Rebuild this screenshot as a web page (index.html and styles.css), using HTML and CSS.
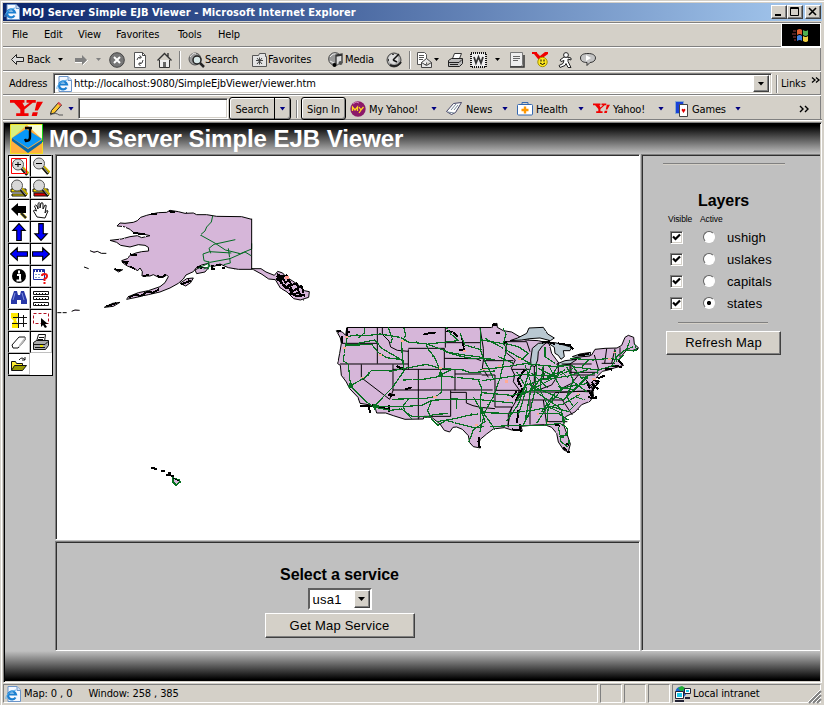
FILE: index.html
```html
<!DOCTYPE html>
<html lang="en">
<head>
<meta charset="utf-8">
<title>MOJ Server Simple EJB Viewer</title>
<link rel="stylesheet" href="styles.css">
</head>
<body>
<svg width="0" height="0" class="defs" aria-hidden="true">
  <filter id="rough" x="-5%" y="-5%" width="110%" height="110%" color-interpolation-filters="sRGB"><feTurbulence type="fractalNoise" baseFrequency=".14" numOctaves="2" seed="4"/><feDisplacementMap in="SourceGraphic" scale="5" xChannelSelector="R" yChannelSelector="G"/></filter>
  <symbol id="ie" viewBox="0 0 16 16"><path d="M3 .5h9l3.500 3.500v11.500H3z" fill="#f4f8ff" stroke="#6a94c8"/><path d="M12 .5v4h3.500" fill="#cfe0f5" stroke="#6a94c8"/><path d="M10.500 11.500A4 4 0 1 1 11 8.500H4" fill="none" stroke="#1c7fd0" stroke-width="2.200"/><path d="M1 13C0 10 5 5 11 4" fill="none" stroke="#58b0ee"/></symbol>
  <symbol id="lens" viewBox="0 0 18 18"><path d="M11 10l6 6" stroke="#c8b400" stroke-width="4"/><path d="M10 10l6 7" stroke="#111" stroke-width="2.500"/><path d="M11 10l5 6" stroke="#aaa"/><circle cx="7" cy="6.500" r="5.500" fill="#d8d8d8" stroke="#555"/></symbol>
  <symbol id="arrow" viewBox="0 0 16 16"><path d="M8 .5l5.500 6H10v9H6v-9H2.500z" fill="#00f" stroke="#000"/></symbol>
  <symbol id="yahoo" viewBox="0 0 32 20"><path d="M0 1h14v3h-2l2 4 5-4h-3V1h9v3h-3l-8 7v4h4v3H6v-3h4v-4L4 4H0zM26 3h6l-5 9h-3zM22 14h5l-1 4h-5z" fill="#f00000"/></symbol>
</svg>
<div class="window">
  <header class="title">
    <svg class="i16"><use href="#ie"/></svg>
    <span>MOJ Server Simple EJB Viewer - Microsoft Internet Explorer</span>
    <div class="wbtns">
      <i><svg width="14" height="12"><path d="M3 8h6v2H3z"/></svg></i>
      <i><svg width="14" height="12"><path d="M2.500 1.500h8v8h-8zM2 2.500h9" fill="none" stroke="#000"/></svg></i>
      <i class="close"><svg width="14" height="12"><path d="M3 2l7 7M10 2L3 9" stroke="#000" stroke-width="1.600"/></svg></i>
    </div>
  </header>

  <nav class="bar menu">
    <span>File</span><span>Edit</span><span>View</span><span>Favorites</span><span>Tools</span><span>Help</span>
    <div class="flag"><svg width="18" height="16" viewBox="0 0 18 16"><path d="M5 3q3-2 5 0v5q-2-2-5 0z" fill="#e06030"/><path d="M11 3q3 2 5 0v5q-2 2-5 0z" fill="#50b050"/><path d="M5 9q3-2 5 0v5q-2-2-5 0z" fill="#4080e0"/><path d="M11 9q3 2 5 0v5q-2 2-5 0z" fill="#f0d040"/><path d="M1 4h3M0 7h4M1 10h3M2 13h2" stroke="#a04040"/></svg></div>
  </nav>

  <div class="bar tools">
    <svg width="14" height="11"><path d="M.5 5.500l5-5v3h7v4h-7v3z" fill="#ddd" stroke="#222"/></svg>
    <span>Back</span><b class="car"></b>
    <svg width="15" height="12"><path d="M1 4h7V1l5 5-5 5V8H1z" fill="#808080"/><path d="M1 8.500h7M9 11l5-5" stroke="#fff"/></svg>
    <b class="car off"></b>
    <svg width="16" height="16"><circle cx="8" cy="8" r="7.300" fill="#777" stroke="#444"/><path d="M5 5l6 6M11 5l-6 6" stroke="#fff" stroke-width="2"/></svg>
    <svg width="15" height="16"><path d="M1.500.500h8l3 3v12h-11z" fill="#fff" stroke="#555"/><path d="M9.500.500v3h3M4 8q0-3 4-3M6.500 3.500L8.500 5l-2 2M10 8q0 4-4 4M7.500 10l-2 2 2 2" fill="none" stroke="#444"/></svg>
    <svg width="16" height="16"><path d="M2.500 8v7.500h10V8" fill="#eee" stroke="#333"/><path d="M.5 8.500l7-7 7 7M11 1v4" fill="none" stroke="#333" stroke-width="1.400"/><path d="M6 10h3v5H6z" fill="#666"/></svg>
    <i class="sep"></i>
    <svg width="17" height="16"><circle cx="7" cy="7" r="6" fill="#999" stroke="#555"/><path d="M2 5q3-5 6-3" stroke="#eee" fill="none"/><circle cx="9" cy="8" r="4" fill="#d8e8e8" stroke="#222" stroke-width="1.500"/><path d="M12 11l4 4" stroke="#222" stroke-width="2.500"/></svg>
    <span>Search</span>
    <svg width="16" height="14"><path d="M.5 2.500h6l1-2h6v3h1v10H.5z" fill="#e4e4e4" stroke="#555"/><path d="M7.500 4.500v7M4 7.500h7M5 5l5 6M10 5l-5 6" stroke="#444"/></svg>
    <span>Favorites</span>
    <svg width="17" height="16"><circle cx="7" cy="7" r="6.400" fill="#999" stroke="#555"/><path d="M2 5q4-5 7-2M2 9l4 2" stroke="#eee" fill="none"/><path d="M8 12V3l6-1v9M8 4l6-1" stroke="#333" stroke-width="1.300" fill="#ddd"/><circle cx="6.500" cy="13" r="2"/><circle cx="12.500" cy="11" r="2" fill="#555"/></svg>
    <span>Media</span>
    <svg width="17" height="16"><circle cx="8" cy="8" r="7" fill="#aaa" stroke="#444"/><circle cx="7.500" cy="7" r="5" fill="#ddd"/><path d="M7 8l6-6M7 8l4 2M7 2v1M2 8h1" stroke="#111" stroke-width="1.500"/><path d="M4 13q7 3 11-3" fill="none" stroke="#222" stroke-width="2"/></svg>
    <i class="sep"></i>
    <svg width="17" height="16"><path d="M1.500.500h7l2 2v10h-9zM3 3.500h5M3 5.500h5M3 7.500h4" fill="#fff" stroke="#555"/><path d="M5.500 10.500l5-4 5 4v5h-10zl5 3 5-3" fill="#e8e8e8" stroke="#444"/></svg>
    <b class="car"></b>
    <svg width="17" height="16"><path d="M5.500 6.500l2-5h7l-2 5z" fill="#fff" stroke="#333"/><path d="M1.500 8.500l3-2h11v5l-3 3h-11z" fill="#bbb" stroke="#222"/><path d="M2 10.500h10l3-3M3 12.500h8" stroke="#222" fill="none"/></svg>
    <svg width="17" height="16"><path d="M1 1h15v14H1z" fill="#eee" stroke="#111" stroke-width="2" stroke-dasharray="1 1"/><path d="M4 5l2 6 2.500-6L11 11l2-6" fill="none" stroke="#333" stroke-width="1.800"/></svg>
    <b class="car"></b>
    <svg width="16" height="16"><path d="M1.500.500h12v12l-1 2h-11z" fill="#eee" stroke="#777"/><path d="M4 4.500h7M4 6.500h7M4 8.500h5" stroke="#666"/><path d="M1 15h14V3" stroke="#333" fill="none" stroke-width="1.500"/></svg>
    <svg width="17" height="17"><path d="M0 1h5v1l3 3 5-4h3v2L9 8v2H6V8L2 3H0z" fill="#f00000"/><circle cx="10.500" cy="11" r="4.700" fill="#ffe820" stroke="#a09000"/><path d="M9 8.500v2M12 8.500v2M8 12q2.500 3 5 0" stroke="#000" fill="none"/></svg>
    <svg width="14" height="16"><path d="M6 5L2 8l1 1.500 3-1-1 3-4 2 1 2 5-2 1-2 2 4h3l-3-6V7l3 1V6L9 5z" fill="#fff" stroke="#222"/><circle cx="8" cy="3" r="2.400" fill="#fff" stroke="#222"/></svg>
    <svg width="17" height="14"><path d="M8 .5c5 0 7.500 2 7.500 4.500S13 9.500 10 9.500l-3 3v-3C3 9.500.5 8 .5 5S3 .500 8 .500z" fill="#c4c4c4" stroke="#333"/><path d="M6 2v6l5-3z" fill="#fff"/></svg>
  </div>

  <div class="bar address">
    <span>Address</span>
    <div class="field"><svg class="i16"><use href="#ie"/></svg><span>http://localhost:9080/SimpleEjbViewer/viewer.htm</span><i class="drop"><b class="car"></b></i></div>
    <i class="sep"></i><span>Links</span><svg class="more" width="9" height="7"><path d="M1 .5l3 2.500-3 2.500M5 .5l3 2.500-3 2.500" fill="none" stroke="#000" stroke-width="1.300"/></svg>
  </div>

  <div class="bar ybar">
    <svg width="33" height="19" viewBox="0 0 32 20" preserveAspectRatio="none"><use href="#yahoo"/></svg>
    <svg width="16" height="16"><path d="M2.500 9.500l7-8 3 2.500-7 8-4 1z" fill="#ffc830" stroke="#222"/><path d="M9 1.500l3 3" stroke="#e05050" stroke-width="2"/><path d="M1 14q6-3 9 0h4" fill="none" stroke="#555"/></svg>
    <b class="car blue"></b>
    <div class="input"></div>
    <div class="yb"><span>Search</span><i><b class="car blue"></b></i></div>
    <i class="sep"></i>
    <div class="yb sign"><span>Sign In</span></div>
    <svg width="16" height="16"><circle cx="8" cy="8" r="7.700" fill="#8c1868"/><path d="M3 3l3-2 3 1" stroke="#d080b8" fill="none"/><path d="M2.500 10V6l2.500 3L7.500 6v4M9 6l2 3 2.500-3M11 9l-2 3" stroke="#ffd820" fill="none" stroke-width="1.300"/></svg>
    <span>My Yahoo!</span><b class="car blue"></b>
    <svg width="17" height="14"><path d="M.5 9.500l7-8 8-1-6 10-4 2z" fill="#fff" stroke="#446"/><path d="M5 8l5-6M8 8l4-5M2 10l6 1" stroke="#789"/></svg>
    <span>News</span><b class="car blue"></b>
    <svg width="16" height="14"><path d="M5 2V.5h6V2" fill="none" stroke="#3468b0"/><rect x=".5" y="2.500" width="15" height="10.500" rx="1" fill="#fff" stroke="#3468b0"/><path d="M8 4.500v7M4.500 8h7" stroke="#ff9800" stroke-width="2.400"/></svg>
    <span>Health</span><b class="car blue"></b>
    <svg width="17" height="11" viewBox="0 0 32 20" preserveAspectRatio="none"><use href="#yahoo"/></svg>
    <span>Yahoo!</span><b class="car blue"></b>
    <svg width="14" height="16"><path d="M.5.500h8v12h-8z" fill="#1840d8" stroke="#8ac"/><path d="M4.500 3.500h8v12h-8z" fill="#fff" stroke="#444"/><path d="M8.500 12L6.500 9q1-2 2-.5 1-1.500 2 .5z" fill="#e00000"/></svg>
    <span>Games</span><b class="car blue"></b>
    <svg width="12" height="8"><path d="M1 1l3 3-3 3M6 1l3 3-3 3" fill="none" stroke="#000" stroke-width="1.400"/></svg>
  </div>
  <div class="rule"></div>

  <main class="page">
    <div class="banner">
      <svg width="33" height="30" viewBox="0 0 33 30"><path d="M.5.500h32v29H.5z" fill="#ffb040" stroke="#f0e020"/><path d="M1 1h16L1 15z" fill="#d8f080"/><path d="M17 1h15v14z" fill="#f8ffd8"/><path d="M32.500 0v18" stroke="#10d010"/><path d="M2 14L16 5l16 10-14 9z" fill="#0898f8"/><path d="M2 14l16 11v4L2 17zM18 25l14-9v3l-14 10z" fill="#0868a8"/><path d="M15 4h7M20 4v9q0 4-4 4l-1-2" fill="none" stroke="#000" stroke-width="2.400"/></svg>
      <h1>MOJ Server Simple EJB Viewer</h1>
    </div>
    <div class="body">
      <div class="palette">
        <i><svg><use href="#lens" x="1" y="1"/><path d="M1.500 1.500h15v15h-15z" fill="none" stroke="#f00"/><path d="M5 7.500h6M8 5v5" stroke="#000"/></svg></i>
        <i><svg><use href="#lens"/><path d="M4 6.500h6" stroke="#000"/></svg></i>
        <i><svg><path d="M1 10h15v3H1zM2 15h14v2H2z" fill="#ffe800" stroke="#111"/><use href="#lens"/></svg></i>
        <i><svg><path d="M1 10h15v3H1z" fill="#ffe800" stroke="#111"/><path d="M2 14h14v3H2z" fill="#e00000" stroke="#111"/><use href="#lens"/></svg></i>
        <i><svg><path d="M11 12l5 5" stroke="#c8b400" stroke-width="3"/><path d="M1 8l7-6v3h8v7H8v3z"/><path d="M11 12l5 5" stroke="#222" stroke-width="2"/></svg></i>
        <i><svg><path d="M5 16L1.500 10q0-2 3 0L2.500 5q1-2 2.500 0l1 3V2.500q1.500-2 2 0V7l1-5q2-1 2 1v5l2-4q2 0 1 2l-1 6q2-4 3-2l-3 7z" fill="#fff" stroke="#111"/></svg></i>
        <i><svg><use href="#arrow"/></svg></i>
        <i><svg><use href="#arrow" transform="rotate(180 9 9)"/></svg></i>
        <i><svg><use href="#arrow" transform="rotate(-90 9 9)"/></svg></i>
        <i><svg><use href="#arrow" transform="rotate(90 9 9)"/></svg></i>
        <i><svg><circle cx="9" cy="9" r="7"/><path d="M9 3.500v3M7 8h3v5M6.500 13.500h5" stroke="#fff" stroke-width="2" fill="none"/></svg></i>
        <i><svg><path d="M1.500 2.500h11v10h-11z" fill="#fff" stroke="#2030a0"/><path d="M1 3.500h12" stroke="#2030a0" stroke-width="3" stroke-dasharray="2 1"/><path d="M3 7.500h8M3 10.500h6" stroke="#80a0d0" stroke-dasharray="2 1"/><path d="M10 9q0-2 2.500-2T15 9q0 2-2.500 3v2M12.500 15v2" stroke="#f01010" stroke-width="2" fill="none"/></svg></i>
        <i><svg><path d="M4 2h3l1 4h2l1-4h3l3 9v4h-6v-4H7v4H1v-4z" fill="#2838a8"/><path d="M5 4L3 11M12 4l2 7" stroke="#8090e0"/></svg></i>
        <i><svg><path d="M1.500 2.500h15v3h-15zM1.500 7.500h15v3h-15zM1.500 13.500h15v3h-15z" fill="#fff" stroke="#111"/><path d="M4 4.500h11M4 9.500h11M3 15.500h12" stroke="#111" stroke-dasharray="1 2"/></svg></i>
        <i><svg><path d="M1 2h7v4l-2 3 2 4v4H2v-5l2-2-3-3z" fill="#ffe800"/><path d="M3 6.500h14M2 12.500h15M8.500 2v15M13.500 4v12" stroke="#111"/></svg></i>
        <i><svg><path d="M1.500 2.500h15v10h-15z" fill="none" stroke="#b01020" stroke-dasharray="3 2"/><path d="M9 7v9l2-2 2 3 2-1-2-3h3z"/></svg></i>
        <i><svg><path d="M2 12l7-8h6v3l-7 8H3z" fill="#fff" stroke="#111"/><path d="M9 12V15l6-8V4z" fill="#bbb"/></svg></i>
        <i><svg><path d="M4.500 8.500l2-7h7l-1 7z" fill="#fff" stroke="#111"/><path d="M7 4.500h5M6 6.500h5" stroke="#111"/><path d="M1.500 9.500l3-2h12v5l-3 4h-12z" fill="#aaa" stroke="#111"/><path d="M2 11.500h11l3-3M3 14.500h10" stroke="#111" fill="none"/><path d="M8 13h3" stroke="#e8e000" stroke-width="2"/></svg></i>
        <i><svg><path d="M1.500 15V6.500h4l1 2h6V11" fill="#ffec30" stroke="#111"/><path d="M1.500 15.500l3-5h12l-4 5z" fill="#989800" stroke="#111"/><path d="M9 5q3-4 6 0M15 2v3h-3" fill="none" stroke="#111"/></svg></i>
        <i class="none"></i>
      </div>

      <div class="center">
        <section class="map">
          <svg width="583" height="384" viewBox="57 156 583 384" shape-rendering="crispEdges" stroke-linejoin="round">
            <g transform="translate(50 200) scale(.33333)" stroke="#000" stroke-width="3" fill="#d6b6d9">
              <g filter="url(#rough)">
              <path d="M605 58L575 50 500 49 470 44 440 44 430 39 405 40 385 35 360 31 350 37 325 38 305 42 290 46 272 52 262 62 250 67 225 70 210 69 201 78 222 80 240 88 250 97 270 100 300 107 275 113 262 107 240 110 215 117 180 121 200 127 212 136 240 141 265 134 285 136 295 142 296 153 275 155 258 159 240 166 232 176 215 182 220 190 232 198 245 203 257 207 262 213 270 204 277 215 276 228 300 228 310 224 322 230 340 232 350 225 355 230 345 248 330 260 295 272 265 278 235 290 230 298 255 293 295 284 330 276 360 264 385 250 400 237 408 225 430 215 440 202 455 195 475 190 490 200 510 192 535 203 565 208 605 208" />
              <path d="M605 206l28 0 15 10 25 10 10-12 15 5 10 12 20 12 20 14 15 15 15 3-2 17-25 8-20-4-20-20-20-12-15-25-20-2-20-14z"/>
              <path d="M120 152l12 5 10-3 12 6 15 0M102 201l14 5M192 207l12 4 14-2-12 7zM390 250l20-14 20-2-8 14-15 10zM163 322l25-12 22-3-20 12zM65 334l10-4 14 1M22 338h12M38 338h12M435 210l15-8 25 2-10 12-25 5z"/>
              <path d="M680 228l12 12 5-8 10 16 10-8 8 15 15-5 5 12 10-4 5 20M678 236l14 8 12 18 14 4 8 14 12 8 26-2M690 246l20 16 8-8 10 20 15-10 5 16M680 220l12 10 18-4 5 12M720 282l25-2 20 8M392 254l30-12M236 292l20-8 15 4 20-12 18 2 18-10M170 319l30-10M215 185l18 0-6 8M440 200h14v8M485 195l0 14M486 206h10M498 194h14M516 204h10M195 208l18 3M240 163l20 3M272 102h14M300 42h20M356 34l20 3M280 228l16-3M320 228l15 4 12-8M240 200l15 7M250 98l34 6" fill="none" stroke-width="6"/>
              <path d="M488 48l-4 18-14 15-5 12-14 12 20 11 25 14 30 20 45 11 34-14V130M605 168l-20-12-45 20-60 11-18-5-3-20 20-7 65 4M535 145l6 44-20 5M482 160l-5-15 15-12 64-14M445 205l28-14 8 8-20 8M475 184v24" fill="none" stroke="#006a20"/>
              </g>
              <path d="M605 56v153" fill="none"/>
              <path d="M706 228h12v9h-12z" fill="#ff9a90" stroke="none"/>
            </g>
            <g transform="translate(325 310) scale(.33333)" stroke="#000" stroke-width="3" fill="#d6b6d9">
              <path filter="url(#rough)" d="M65 55H500L505 42 516 40 517 52 535 62 560 66 600 90 640 92 672 100 680 130 705 164 740 150 755 142 800 135 810 118 840 115 876 114 890 106 900 82 910 76 926 82 928 102 941 114 922 122 905 120 890 138 880 154 896 166 868 174 850 180 832 184 820 196 810 208 815 218 800 230 806 258 795 274 770 284 750 306 722 320 716 345 728 378 736 402 730 426 716 420 700 396 695 370 680 352 658 344 630 345 588 349 592 362 560 360 538 353 505 357 485 372 466 388 460 402 466 414 445 410 434 398 430 377 412 358 395 351 384 352 374 366 358 361 345 342 320 322 297 321 295 327 240 328 205 317 182 309 155 309 150 292 136 285 105 280 99 262 74 236 64 216 49 196 46 166 38 161 44 130 49 100 46 84 34 62 52 66 62 76z"/>
              <path d="M65 60V52.500H500V60" stroke="none"/><path d="M65 52.500H500" fill="none"/>
              <path filter="url(#rough)" d="M555 92L578 84 605 70 612 54 655 52 668 72 688 84 676 92 645 84 615 86 590 90zM617 150L622 115 640 100 665 98 652 108 640 125 638 150 630 170 618 166zM668 98L690 98 720 106 740 112 735 122 715 122 718 140 708 148 700 136 690 130 688 112zM695 162L720 152 756 148 735 162 700 168zM742 140L765 132 797 127 795 138 750 142z" fill="#b9c8d1"/>
              <path fill="none" d="M157 53v108M45 162h205M50 100h110M109 163v40l85 65 10-26V163M203 178h177M250 118v60M250 115h108v63M361 53v60M359 98h106M358 145l95 1 15 6M203 240h300M280 178v150M390 178v63M390 192h80M377 241v78h-80M377 247h47v32l20 8 22 5 44 4M172 53v20l20 20 5 18 20 10 33 3M465 53l10 62v37l-3 22 18 28M475 152h90M545 98l-4 28 30 24-12 25 10 20-4 20 18 25-8 30-25 42v40M470 195h40v96M510 241h80M535 95h70l10 30M560 178h56M628 168v49l-10 24M655 165v45M700 160v35l-20 30-40 15M580 246h160M572 270h140M615 272v72M655 270l10 73M665 335h62M712 270l30 45M690 248l70-4 46 2M735 162v25h85M738 163v32h72M760 195l-20 25-30 15M775 200l18 22 12 15M808 135l14 48M845 116l-6 44M870 116l-10 44M885 112v30M830 160h40M742 245l62-3M510 291h50l-12 58M710 162h90"/>
              <path filter="url(#rough)" fill="none" stroke-width="6" d="M66 55v24M50 78l2 20M35 64h14M62 65h12M295 74l15-4 20-2M365 62l20 6 14 12M412 85l5 34M403 120h14M194 250l4 12M190 255h20M215 168l22 12M240 238l20-6M105 288l50-2M130 290l6 18M160 290l35 10M192 285v22M463 380v32M460 395l5 18M502 44l14 0M508 38v10M586 342v18M560 358l30 4M722 402l10 2M726 425h8M715 412l12 10M800 215l8 14-8 20 4 18M803 210l18 4-8 14M860 168l30 2M840 178h20M592 235l-20 38M560 262l16-18M598 180l-20 30 12 22M650 98l22-4M700 100l35 6 10 12M670 96l20 6M760 136l32-4M512 68h12M534 96l12 0M538 95v8M605 130h4M785 215l10 20M790 262l24 2M812 258v10M580 300l-4 40M690 345l14 2M818 205l22-8M800 222l20 16M790 240l12 20M880 150l12 14"/>
              <g filter="url(#rough)" fill="none" stroke="#067020" stroke-width="3.600">
                <path d="M68 78l-8 35-5 40 15 10 5 50 5 18 45 45 20 15 50 10 35-4 30 22 45 2 25-8 40-2M80 225l40-22 20-22 60 2 40-8 65-12 40 12 70 5 20 8 75-5M65 80l30-5 30 2 40-5 60 10 25 14 55 6 50 18 20 10 55 14 80 4M100 100l50-10 20 25 35 20 30 18 2 30-35 50-20 20-15 16-17 18M60 105l40 0 40-2 20 25 25 15 45 6M118 54l0 15-18 15M237 55l5 20-12 22 2 45 5 42M190 52l12 35-5 12M235 210l60-2 55-10 60 6 55 5M150 288l80 2 60-4 30-15 65-4 80 2 100 10M200 268l60-2 40 0 35-8 15-12-2-60-20-45-20-25-5-15M380 178l-40 20M320 271l-12 30 10 25 20 20 25-15 55 15 35 8 25-5M335 335l60-10 30-8 35-5M250 268l-15 18 5 20 20 20M395 270v26M310 102l90-10-22-20-15-20M405 70l15 35 50 15M358 125l60 10 60 8M460 210l10 25-3 30 0 70M445 260l25 45 10 30-35 25-15 40"/>
                <path d="M467 53l0 70 12 30 25 50M535 55l8 18-8 28-70-12M535 100l10 15-20 90-20 55-25 45-15 60M480 85l55 30M540 118l35 20 45 25-20 60-20 60-35 50M465 178l60-5 75-12 85 8 50-2M470 212l60-8 60-10 100 5 30-20M470 248l90 8 70-16 70 2 30-12 60-10M465 308l85 2 80-10 85-18 50-30M475 308l35 50M495 350l80-4 80 0 50-6 20 12 4 18M600 165l20 60-20 110M635 160l-5 80-15 65-20 40M655 165l-10 75 25 50 40 20 5 30M670 165l40 75-40 45-35 55M700 165l-20 35-75 25-30 48M605 220l110 50 35-35 40-40M600 250l55-30 90-45M632 245l75 50 12 45M670 290l-5 52M680 290l50 15 30-30M725 170l20 40-20 50 20 30M740 165l30 40 50-20M700 230l50 10 40-40M590 150l20-20-30-20-40-10M740 170l80 10 50-15M735 145l70 5 50-5 25 5 15-15M650 210l80-12 60-20M575 185l30 50-25 80M640 310l60 0 30 20M750 260l30 10M745 215l40 30M860 170l15-30 25-20 25-10M870 120l5 35M915 92l-12 30 32-2-6-18M790 150l-20 20M660 110l0 30 30 20M700 350l8 45 20 15M730 370l-25 15M640 175l40 20 30-10 20 20M520 140l45 20M620 190l50 45M660 190l-40 50-40 20M690 250l-40 55"/>
              </g>
              <g fill="none" stroke="#067020" stroke-width="8"><path d="M76 220v14M70 228h14M143 286h14M150 282v18M465 308h16M470 290v22M632 240h10M345 185v15M706 380h10M720 374h6M732 390v12"/></g>
              <path d="M60 78h8v5h-8zM55 112h8v5h-8zM108 200h8v5h-8zM162 132h10v5h-10zM228 90h8v5h-8zM342 172h8v5h-8zM325 258h10v5h-10zM415 120h8v5h-8zM450 342h8v5h-8zM471 176h12v5h-12zM540 210h10v8h-10zM520 165h8v6h-8zM580 145h8v5h-8zM635 310h8v5h-8zM665 335h8v5h-8zM800 205h12v6h-12zM850 145h8v6h-8zM865 125h8v5h-8zM755 250h8v5h-8zM545 268h8v5h-8z" fill="#ffab94" stroke="none"/>
            </g>
            <g fill="#d6b6d9" stroke="#000"><path d="M151 468h4M154 469h3M161 471h4M166 475h5M168 473h3M171 476h3" stroke-width="2"/><path d="M173 478l6 2 1 2-4 3-3-3z" stroke="#067020" stroke-width="1.500"/><path d="M173 478l6 3"/></g>
          </svg>
        </section>
        <section class="service">
          <h2>Select a service</h2>
          <div class="select"><span>usa1</span><i class="drop"><b class="car"></b></i></div>
          <button>Get Map Service</button>
        </section>
      </div>

      <aside class="side">
        <hr>
        <h2>Layers</h2>
        <div class="row heads"><span>Visible</span><span>Active</span></div>
        <div class="row"><i class="chk"><svg width="9" height="9"><path d="M1 3.500l2.500 2.500L8 1.500" fill="none" stroke="#000" stroke-width="2.200"/></svg></i><i class="rad"></i><span>ushigh</span></div>
        <div class="row"><i class="chk"><svg width="9" height="9"><path d="M1 3.500l2.500 2.500L8 1.500" fill="none" stroke="#000" stroke-width="2.200"/></svg></i><i class="rad"></i><span>uslakes</span></div>
        <div class="row"><i class="chk"><svg width="9" height="9"><path d="M1 3.500l2.500 2.500L8 1.500" fill="none" stroke="#000" stroke-width="2.200"/></svg></i><i class="rad"></i><span>capitals</span></div>
        <div class="row"><i class="chk"><svg width="9" height="9"><path d="M1 3.500l2.500 2.500L8 1.500" fill="none" stroke="#000" stroke-width="2.200"/></svg></i><i class="rad on"></i><span>states</span></div>
        <hr class="short">
        <button>Refresh Map</button>
      </aside>
    </div>
    <div class="foot"></div>
  </main>

  <footer class="status">
    <div class="pane"><svg class="i16"><use href="#ie"/></svg><span>Map: 0 , 0</span><span>Window: 258 , 385</span></div>
    <div class="pane"></div><div class="pane"></div><div class="pane"></div>
    <div class="pane zone"><svg width="17" height="16"><circle cx="7" cy="6" r="5.500" fill="#1868d0"/><path d="M4 2l4-2 3 2-3 4z" fill="#20b030"/><path d="M10.500 2.500h6v5h-6zM1.500 5.500h8v7h-8z" fill="#fff" stroke="#223"/><path d="M12 4h3v2h-3zM3 7h5v4H3z" fill="#20c8e8"/><path d="M1 15h9M11 12h5" stroke="#223" stroke-width="2"/></svg><span>Local intranet</span>
      <svg class="grip" width="13" height="13"><path d="M1 13L13 1M5 13l8-8M9 13l4-4" stroke="#808080" stroke-width="2"/><path d="M0 12L12 0M4 12l9-9M8 12l5-5" stroke="#fff"/></svg></div>
  </footer>
</div>
</body>
</html>
```
FILE: styles.css
```css
* { box-sizing: border-box; }
body { margin: 0; overflow: hidden; background: #fff; font: 11px/14px "DejaVu Sans Condensed", "DejaVu Sans", sans-serif; font-stretch: condensed; color: #000; }
i, b { font-style: normal; display: block; flex: none; }
svg { display: block; flex: none; overflow: visible; }
.defs { position: absolute; }
.i16 { width: 16px; height: 16px; }
.window { width: 824px; height: 705px; padding: 3px 2px 0 3px; background: #d4d0c8; box-shadow: inset 1px 1px #d4d0c8, inset 2px 2px #fff; }
span { white-space: nowrap; }

.title { height: 18px; display: flex; align-items: center; padding-left: 1px; margin-bottom: 1px; background: linear-gradient(90deg, #0a246a, #a6caf0); color: #fff; font-weight: bold; }
.title span { margin-left: 2px; padding-top: 1px; letter-spacing: .07px; }
.wbtns { display: flex; margin: 0 1px 0 auto; }
.wbtns i { width: 16px; height: 14px; background: #d4d0c8; border: 1px solid; border-color: #fff #404040 #404040 #fff; box-shadow: inset -1px -1px #808080; }
.wbtns .close { margin-left: 2px; }

.bar { height: 24px; margin-right: 1px; border-top: 1px solid #808080; box-shadow: inset 0 1px #fff, inset -1px 0 #808080; display: grid; align-items: center; justify-items: start; padding-top: 1px; letter-spacing: -.15px; }
.car { width: 5px; height: 3px; background: #000; clip-path: polygon(0 0, 100% 0, 50% 100%); }
.car.off { background: #808080; }
.car.blue { background: #000080; }
.sep { width: 2px; height: 18px; border-left: 1px solid #808080; border-right: 1px solid #fff; }

.menu { grid-template-columns: 32px 34px 38px 62px 40px 1fr 39px; padding-left: 9px; }
.flag { width: 38px; height: 22px; background: #000; display: flex; align-items: center; justify-content: center; outline: 1px solid #fff; }
.tools { grid-template-columns: 16px 31px 16px 22px 13px 24px 24px 22px 9px 17px 47px 16px 60px 17px 41px 23px 7px 18px 13px 23px 25px 14px 23px 26px 22px 17px; padding: 2px 0 0 8px; }
.address { grid-template-columns: 44px 723px 5px 30px 14px; padding: 2px 0 0 6px; }
.field { display: flex; align-items: center; width: 719px; height: 21px; padding: 0 2px; background: #fff; border: 1px solid; border-color: #808080 #fff #fff #808080; box-shadow: inset 1px 1px #404040, inset -1px -1px #d4d0c8; }
.field span { margin-left: 2px; letter-spacing: -.12px; padding-top: 1px; }
.drop { width: 16px; height: 17px; margin-left: auto; display: flex; align-items: center; justify-content: center; background: #d4d0c8; border: 1px solid; border-color: #fff #404040 #404040 #fff; box-shadow: inset -1px -1px #808080; }
.drop .car { width: 7px; height: 4px; }
.more { align-self: start; margin-top: 4px; }
.ybar { height: 25px; grid-template-columns: 39px 19px 10px 151px 67px 5px 49px 19px 62px 15px 20px 36px 15px 19px 42px 15px 20px 45px 17px 17px 43px 64px 12px; padding: 2px 0 0 7px; }
.ybar > span { padding-top: 2px; }
.ybar > .car, .yb .car { height: 4px; width: 6px; }
.input { width: 150px; height: 21px; background: #fff; border: 1px solid; border-color: #808080 #fff #fff #808080; box-shadow: inset 1px 1px #404040, inset -1px -1px #d4d0c8; }
.yb { display: flex; width: 62px; height: 23px; border: 1px solid #000; border-radius: 3px; box-shadow: inset 1px 1px #fff, inset -1px -1px #808080; }
.yb span { flex: 1; text-align: center; line-height: 23px; }
.yb i { width: 16px; border-left: 1px solid #000; display: flex; align-items: center; justify-content: center; }
.yb.sign { width: 45px; }
.rule { height: 3px; border-top: 1px solid #808080; border-bottom: 1px solid #d4d0c8; background: #fff; }

.page { width: 819px; height: 561px; border: 1px solid; border-color: #808080 #fff #fff #808080; box-shadow: inset 1px 1px #000, inset -1px -1px #d4d0c8; padding: 1px; background: #c0c0c0; font-family: "Liberation Sans", Arial, sans-serif; font-stretch: normal; }
.banner { height: 30px; display: flex; padding-left: 5px; background: linear-gradient(#000 5%, #c0c0c0); }
h1 { margin: 0 0 0 6px; font-size: 24px; line-height: 29px; color: #fff; letter-spacing: -.05px; white-space: nowrap; }
.body { height: 497px; display: flex; }
.palette { display: grid; grid-template-columns: 22px 22px; grid-auto-rows: 22px; width: 45px; height: 221px; margin: 1px 2px 0 3px; background: #fff; border-right: 1px solid #000; border-bottom: 1px solid #000; }
.palette i { border: 1px solid; border-color: #000 #c0c0c0 #c0c0c0 #000; padding: 1px; }
.palette .none { border-color: #fff; }
.palette svg { width: 18px; height: 18px; }
.center { width: 585px; margin-right: 1px; }
.map, .service, .side { border: 1px solid; border-color: #808080 #fff #fff #808080; box-shadow: inset 1px 1px #303030; }
.map { height: 386px; padding: 1px 0 0 1px; background: #fff; overflow: hidden; }
.map svg { overflow: hidden; }
.service { height: 110px; margin-top: 1px; display: flex; flex-direction: column; align-items: center; padding: 24px 16px 0 0; }
h2 { margin: 0; font-size: 16px; line-height: 18px; letter-spacing: -.08px; }
.select { display: flex; width: 64px; height: 22px; margin-top: 4px; background: #fff; border: 2px solid; border-color: #606060 #fff #fff #606060; font-size: 13px; line-height: 19px; letter-spacing: .3px; padding-left: 3px; }
.select .drop { height: 18px; }
button { width: 150px; height: 24px; margin: 4px 0 0; padding: 0; background: #d4d0c8; border: 1px solid; border-color: #fff #404040 #404040 #fff; box-shadow: inset -1px -1px #808080; font: 13px "Liberation Sans", Arial, sans-serif; letter-spacing: .2px; color: #000; border-radius: 0; }
.service button { height: 25px; margin-top: 3px; }
.side { width: 180px; height: 497px; border-right: 0; padding: 8px 0 0 21px; }
hr { width: 122px; height: 2px; margin: 0; border: 0; border-top: 1px solid #808080; border-bottom: 1px solid #d4d0c8; }
.side h2 { margin: 27px 0 0 35px; }
.row { display: grid; grid-template-columns: 33px 24px 1fr; align-items: center; height: 22px; padding-left: 7px; font-size: 13px; letter-spacing: .1px; }
.row > span { padding-top: 1px; }
.row.heads { height: 16px; padding-left: 5px; grid-template-columns: 32px 1fr; font-size: 8.500px; letter-spacing: -.1px; }
.chk { width: 13px; height: 13px; padding: 1px; background: #fff; border: 1px solid; border-color: #808080 #fff #fff #808080; box-shadow: inset 1px 1px #404040, inset -1px -1px #d4d0c8; }
.rad { width: 12px; height: 12px; border-radius: 50%; border: 1px solid; border-color: #606060 #fff #fff #606060; background: #fff; }
.rad.on { background: radial-gradient(circle, #000 1.800px, #fff 2.400px); }
.short { width: 90px; margin: 8px 0 0 15px; }
.side button { width: 115px; margin: 7px 0 0 3px; padding-bottom: 2px; }
.foot { height: 30px; background: linear-gradient(#c0c0c0, #000 95%); }

.status { display: grid; grid-template-columns: 595px 22px 22px 22px 1fr; gap: 2px; height: 19px; margin: 1px 1px 0 0; letter-spacing: -.1px; }
.pane { position: relative; display: flex; align-items: center; padding-left: 1px; border: 1px solid; border-color: #808080 #fff #fff #808080; }
.pane span { margin: 1px 0 0 3px; }
.pane span + span { margin-left: 16px; }
.zone span { margin-left: 2px; }
.grip { position: absolute; right: -1px; bottom: -1px; }
```
